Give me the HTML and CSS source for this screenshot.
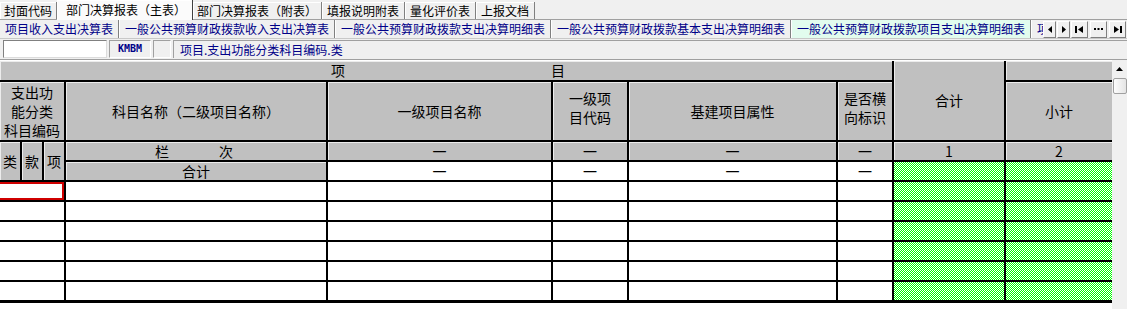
FILE: index.html
```html
<!DOCTYPE html>
<html lang="zh-CN">
<head>
    <meta charset="UTF-8">
    <title>部门决算报表</title>
    <link rel="stylesheet" href="styles.css">
</head>
<body>
    <div class="app">
        <div class="tabs">
            <div class="tab">封面代码</div>
            <div class="tab active">部门决算报表（主表）</div>
            <div class="tab">部门决算报表（附表）</div>
            <div class="tab roomy">填报说明附表</div>
            <div class="tab roomy">量化评价表</div>
            <div class="tab roomy">上报文档</div>
        </div>

        <div class="subbar">
            <div class="subtabs">
                <div class="subtab">项目收入支出决算表</div>
                <div class="subtab">一般公共预算财政拨款收入支出决算表</div>
                <div class="subtab">一般公共预算财政拨款支出决算明细表</div>
                <div class="subtab">一般公共预算财政拨款基本支出决算明细表</div>
                <div class="subtab current">一般公共预算财政拨款项目支出决算明细表</div>
                <div class="subtab">项</div>
            </div>
            <div class="nav">
                <div class="nb small"><svg width="4" height="7" viewBox="0 0 4 7"><path d="M4 0V7L0 3.5Z" fill="#000"/></svg></div>
                <div class="nb small"><svg width="4" height="7" viewBox="0 0 4 7"><path d="M0 0V7L4 3.5Z" fill="#000"/></svg></div>
                <div class="nb"><svg width="9" height="7" viewBox="0 0 9 7"><rect x="0" y="0" width="2" height="7" fill="#000"/><path d="M8 0V7L3 3.5Z" fill="#000"/></svg></div>
                <div class="nb"><svg width="9" height="2" viewBox="0 0 9 2"><rect x="0" y="0" width="2" height="2" fill="#000"/><rect x="3.5" y="0" width="2" height="2" fill="#000"/><rect x="7" y="0" width="2" height="2" fill="#000"/></svg></div>
                <div class="nb"><svg width="9" height="7" viewBox="0 0 9 7"><path d="M1 0V7L6 3.5Z" fill="#000"/><rect x="7" y="0" width="2" height="7" fill="#000"/></svg></div>
            </div>
        </div>

        <div class="fieldbar">
            <div class="cellinput"></div>
            <div class="code">KMBM</div>
            <div class="blank"></div>
            <div class="caption">项目.支出功能分类科目编码.类</div>
        </div>

        <div class="workarea">
            <div class="sheet">
                <!-- header row 1 -->
                <div class="c h span8 spaced"><span>项</span><span>目</span></div>
                <div class="c h rows2">合计</div>
                <div class="c h last"></div>

                <!-- header row 2 -->
                <div class="c h span3 multi">支出功<br>能分类<br>科目编码</div>
                <div class="c h">科目名称（二级项目名称）</div>
                <div class="c h">一级项目名称</div>
                <div class="c h multi two">一级项<br>目代码</div>
                <div class="c h">基建项目属性</div>
                <div class="c h multi two">是否横<br>向标识</div>
                <div class="c h last">小计</div>

                <!-- header row 3 -->
                <div class="c h rows2">类</div>
                <div class="c h rows2">款</div>
                <div class="c h rows2">项</div>
                <div class="c h lanci"><span>栏</span><span>次</span></div>
                <div class="c h">一</div>
                <div class="c h">一</div>
                <div class="c h">一</div>
                <div class="c h">一</div>
                <div class="c h">1</div>
                <div class="c h last">2</div>

                <!-- total row -->
                <div class="c h">合计</div>
                <div class="c">一</div>
                <div class="c">一</div>
                <div class="c">一</div>
                <div class="c">一</div>
                <div class="c g"></div>
                <div class="c g last"></div>

                <!-- data rows -->
                <div class="c span3 sel"></div><div class="c"></div><div class="c"></div><div class="c"></div><div class="c"></div><div class="c"></div><div class="c g"></div><div class="c g last"></div>
                <div class="c span3"></div><div class="c"></div><div class="c"></div><div class="c"></div><div class="c"></div><div class="c"></div><div class="c g"></div><div class="c g last"></div>
                <div class="c span3"></div><div class="c"></div><div class="c"></div><div class="c"></div><div class="c"></div><div class="c"></div><div class="c g"></div><div class="c g last"></div>
                <div class="c span3"></div><div class="c"></div><div class="c"></div><div class="c"></div><div class="c"></div><div class="c"></div><div class="c g"></div><div class="c g last"></div>
                <div class="c span3"></div><div class="c"></div><div class="c"></div><div class="c"></div><div class="c"></div><div class="c"></div><div class="c g"></div><div class="c g last"></div>
                <div class="c span3 end"></div><div class="c end"></div><div class="c end"></div><div class="c end"></div><div class="c end"></div><div class="c end"></div><div class="c g end"></div><div class="c g last end"></div>
            </div>
            <div class="vscroll">
                <div class="arrow"><svg width="7" height="4" viewBox="0 0 7 4"><path d="M0 4H7L3.5 0Z" fill="#000"/></svg></div>
                <div class="thumb"></div>
            </div>
        </div>
    </div>
</body>
</html>
```

FILE: styles.css
```css
body {
    margin: 0;
    background: #f0f0f0;
    font-family: "Noto Sans CJK SC", "Liberation Sans", sans-serif;
    font-size: 12px;
    overflow: hidden;
}
.app {
    width: 1127px;
    height: 309px;
    display: flex;
    flex-direction: column;
}

/* top tabs */
.tabs {
    display: flex;
    align-items: flex-end;
    height: 19px;
    border-bottom: 1px solid #a0a0a0;
}
.tab {
    height: 17px;
    line-height: 17px;
    padding: 0 4px;
    border-right: 1px solid #808080;
    box-shadow: inset 1px 1px 0 #fff;
    white-space: nowrap;
    color: #000;
}
.tab.roomy {
    padding: 0 5px;
}
.tab.active {
    height: 20px;
    line-height: 19px;
    margin-bottom: -1px;
    padding: 0 6px 0 9px;
    background: #fbfbfb;
    border-right: 1px solid #404040;
}

/* sub tabs */
.subbar {
    display: flex;
    height: 18px;
    border-bottom: 1px solid #c8c8c8;
}
.subtabs {
    flex: 1;
    display: flex;
    overflow: hidden;
}
.subtab {
    padding: 0 5px;
    margin-right: 1px;
    line-height: 18px;
    color: #000088;
    white-space: nowrap;
    border-right: 1px solid #808080;
    box-shadow: 1px 0 0 #fff;
}
.subtab.current {
    background: #e2fcee;
}
.nav {
    width: 84px;
    display: flex;
    align-items: center;
    gap: 2px;
}
.nb {
    width: 15px;
    height: 15px;
    display: flex;
    align-items: center;
    justify-content: center;
    background: #f0f0f0;
    border: 1px solid;
    border-color: #fff #808080 #808080 #fff;
}
.nb.small {
    width: 11px;
    margin-right: -1px;
}

/* field bar */
.fieldbar {
    display: flex;
    align-items: center;
    height: 20px;
}
.cellinput {
    margin-left: 3px;
    width: 102px;
    height: 16px;
    background: #fff;
    border: 1px solid;
    border-color: #808080 #dcdcdc #dcdcdc #808080;
}
.code {
    margin-left: 2px;
    width: 40px;
    height: 16px;
    border: 1px solid;
    border-color: #a0a0a0 #fff #fff #a0a0a0;
    color: #000088;
    font-family: "DejaVu Sans Mono", monospace;
    font-size: 10px;
    font-weight: bold;
    line-height: 15px;
    text-align: center;
}
.blank {
    margin-left: 2px;
    width: 16px;
    height: 16px;
    border: 1px solid;
    border-color: #a0a0a0 #fff #fff #a0a0a0;
}
.caption {
    flex: 1;
    margin-left: 2px;
    height: 17px;
    padding-left: 6px;
    line-height: 17px;
    color: #000088;
    border-top: 1px solid #a0a0a0;
    border-left: 1px solid #a0a0a0;
}

/* sheet */
.workarea {
    flex: 1;
    display: flex;
    background: #fff;
    border-top: 1px solid #a0a0a0;
}
.sheet {
    margin-top: 1px;
    width: 1112px;
    display: grid;
    grid-template-columns: 22px 22px 22px 262px 225px 76px 209px 56px 112px 106px;
    grid-template-rows: 21px 60px 20px 20px repeat(5, 20px) 21px;
    align-content: start;
}
.c {
    box-sizing: border-box;
    border-right: 2px solid #000;
    border-bottom: 2px solid #000;
    display: flex;
    align-items: center;
    justify-content: center;
    font-size: 14px;
    line-height: 19px;
    text-align: center;
    color: #000;
}
.h {
    background: #c0c0c0;
    box-shadow: inset 1px 1px 0 #ececec;
}
.last {
    border-right: none;
}
.end {
    border-bottom-width: 3px;
}
.span8 {
    grid-column: span 8;
}
.span3 {
    grid-column: span 3;
}
.rows2 {
    grid-row: span 2;
}
.spaced {
    gap: 206px;
    padding-left: 4px;
}
.lanci {
    gap: 50px;
    padding-right: 4px;
}
.multi {
    line-height: 19px;
}
.two {
    padding-bottom: 6px;
}
.g {
    background: repeating-conic-gradient(#00ff00 0 25%, #fff 0 50%) 0 0 / 2px 2px;
}
.sel {
    box-shadow: inset 0 2px 0 #d00000, inset -2px 0 0 #d00000, inset 0 -2px 0 #d00000;
}

/* scrollbar */
.vscroll {
    width: 15px;
    background: #f0f0f0;
}
.arrow {
    height: 18px;
    display: flex;
    align-items: center;
    justify-content: center;
}
.thumb {
    box-sizing: border-box;
    width: 14px;
    height: 16px;
    margin-left: 1px;
    border: 1px solid #a0a0a0;
    border-radius: 2px;
    background: linear-gradient(to right, #fdfdfd, #e4e4e4);
}
```
